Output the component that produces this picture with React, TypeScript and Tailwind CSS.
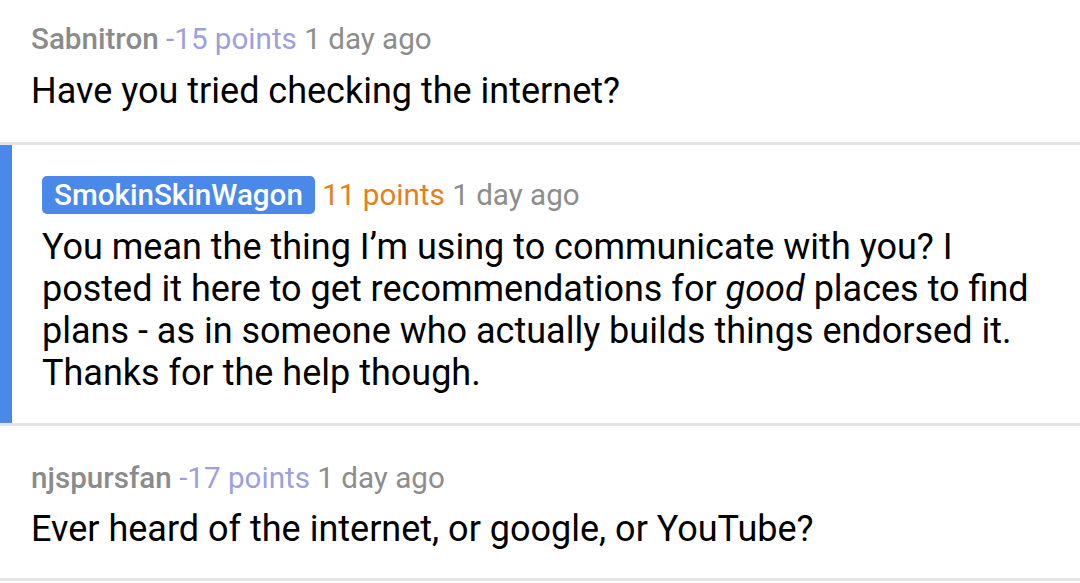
import React from 'react'

interface MetaProps {
  author: string
  points: number
  age: string
  op?: boolean
}

const Meta: React.FC<MetaProps> = ({ author, points, age, op }) => {
  const negative = points < 0
  return (
    <div className="text-[29.6px] leading-[36px] whitespace-nowrap">
      {op ? (
        <span className="inline-block rounded-[5px] bg-[#4a89ea] px-[12px] leading-[38px] font-medium text-white">
          {author}
        </span>
      ) : (
        <span className="font-medium text-[#8b8b8b]">{author}</span>
      )}{' '}
      <span className={negative ? 'text-[#9d9fdf]' : 'text-[#e3801f]'}>{points} points</span>{' '}
      <span className="text-[#8d8d8d]">{age}</span>
    </div>
  )
}

const App: React.FC = () => {
  return (
    <div className="w-[1080px] h-[583px] overflow-hidden bg-white text-black" style={{ fontFamily: 'Roboto, "Noto Sans", sans-serif' }}>
      <div className="pl-[31px] pr-4 pt-[21px] pb-[30px]">
        <Meta author="Sabnitron" points={-15} age="1 day ago" />
        <p className="mt-[13px] text-[36px] leading-[42px]">Have you tried checking the internet?</p>
      </div>
      <div className="h-[3px] bg-[#e5e5e5]" />

      <div className="flex">
        <div className="w-[12px] shrink-0 bg-[#4a89ea]" />
        <div className="pl-[30px] pr-[14px] pt-[31px] pb-[29px]">
          <Meta author="SmokinSkinWagon" points={11} age="1 day ago" op />
          <p className="mt-[12px] text-[36px] leading-[42px]">
            You mean the thing I’m using to communicate with you? I posted it here to get recommendations for{' '}
            <em>good</em> places to find plans - as in someone who actually builds things endorsed it. Thanks for
            the help though.
          </p>
        </div>
      </div>
      <div className="h-[3px] bg-[#e5e5e5]" />

      <div className="pl-[31px] pr-4 pt-[34px] pb-[28px]">
        <Meta author="njspursfan" points={-17} age="1 day ago" />
        <p className="mt-[12px] text-[36px] leading-[42px]">Ever heard of the internet, or google, or YouTube?</p>
      </div>
      <div className="h-[3px] bg-[#e5e5e5]" />
    </div>
  )
}

export default App
